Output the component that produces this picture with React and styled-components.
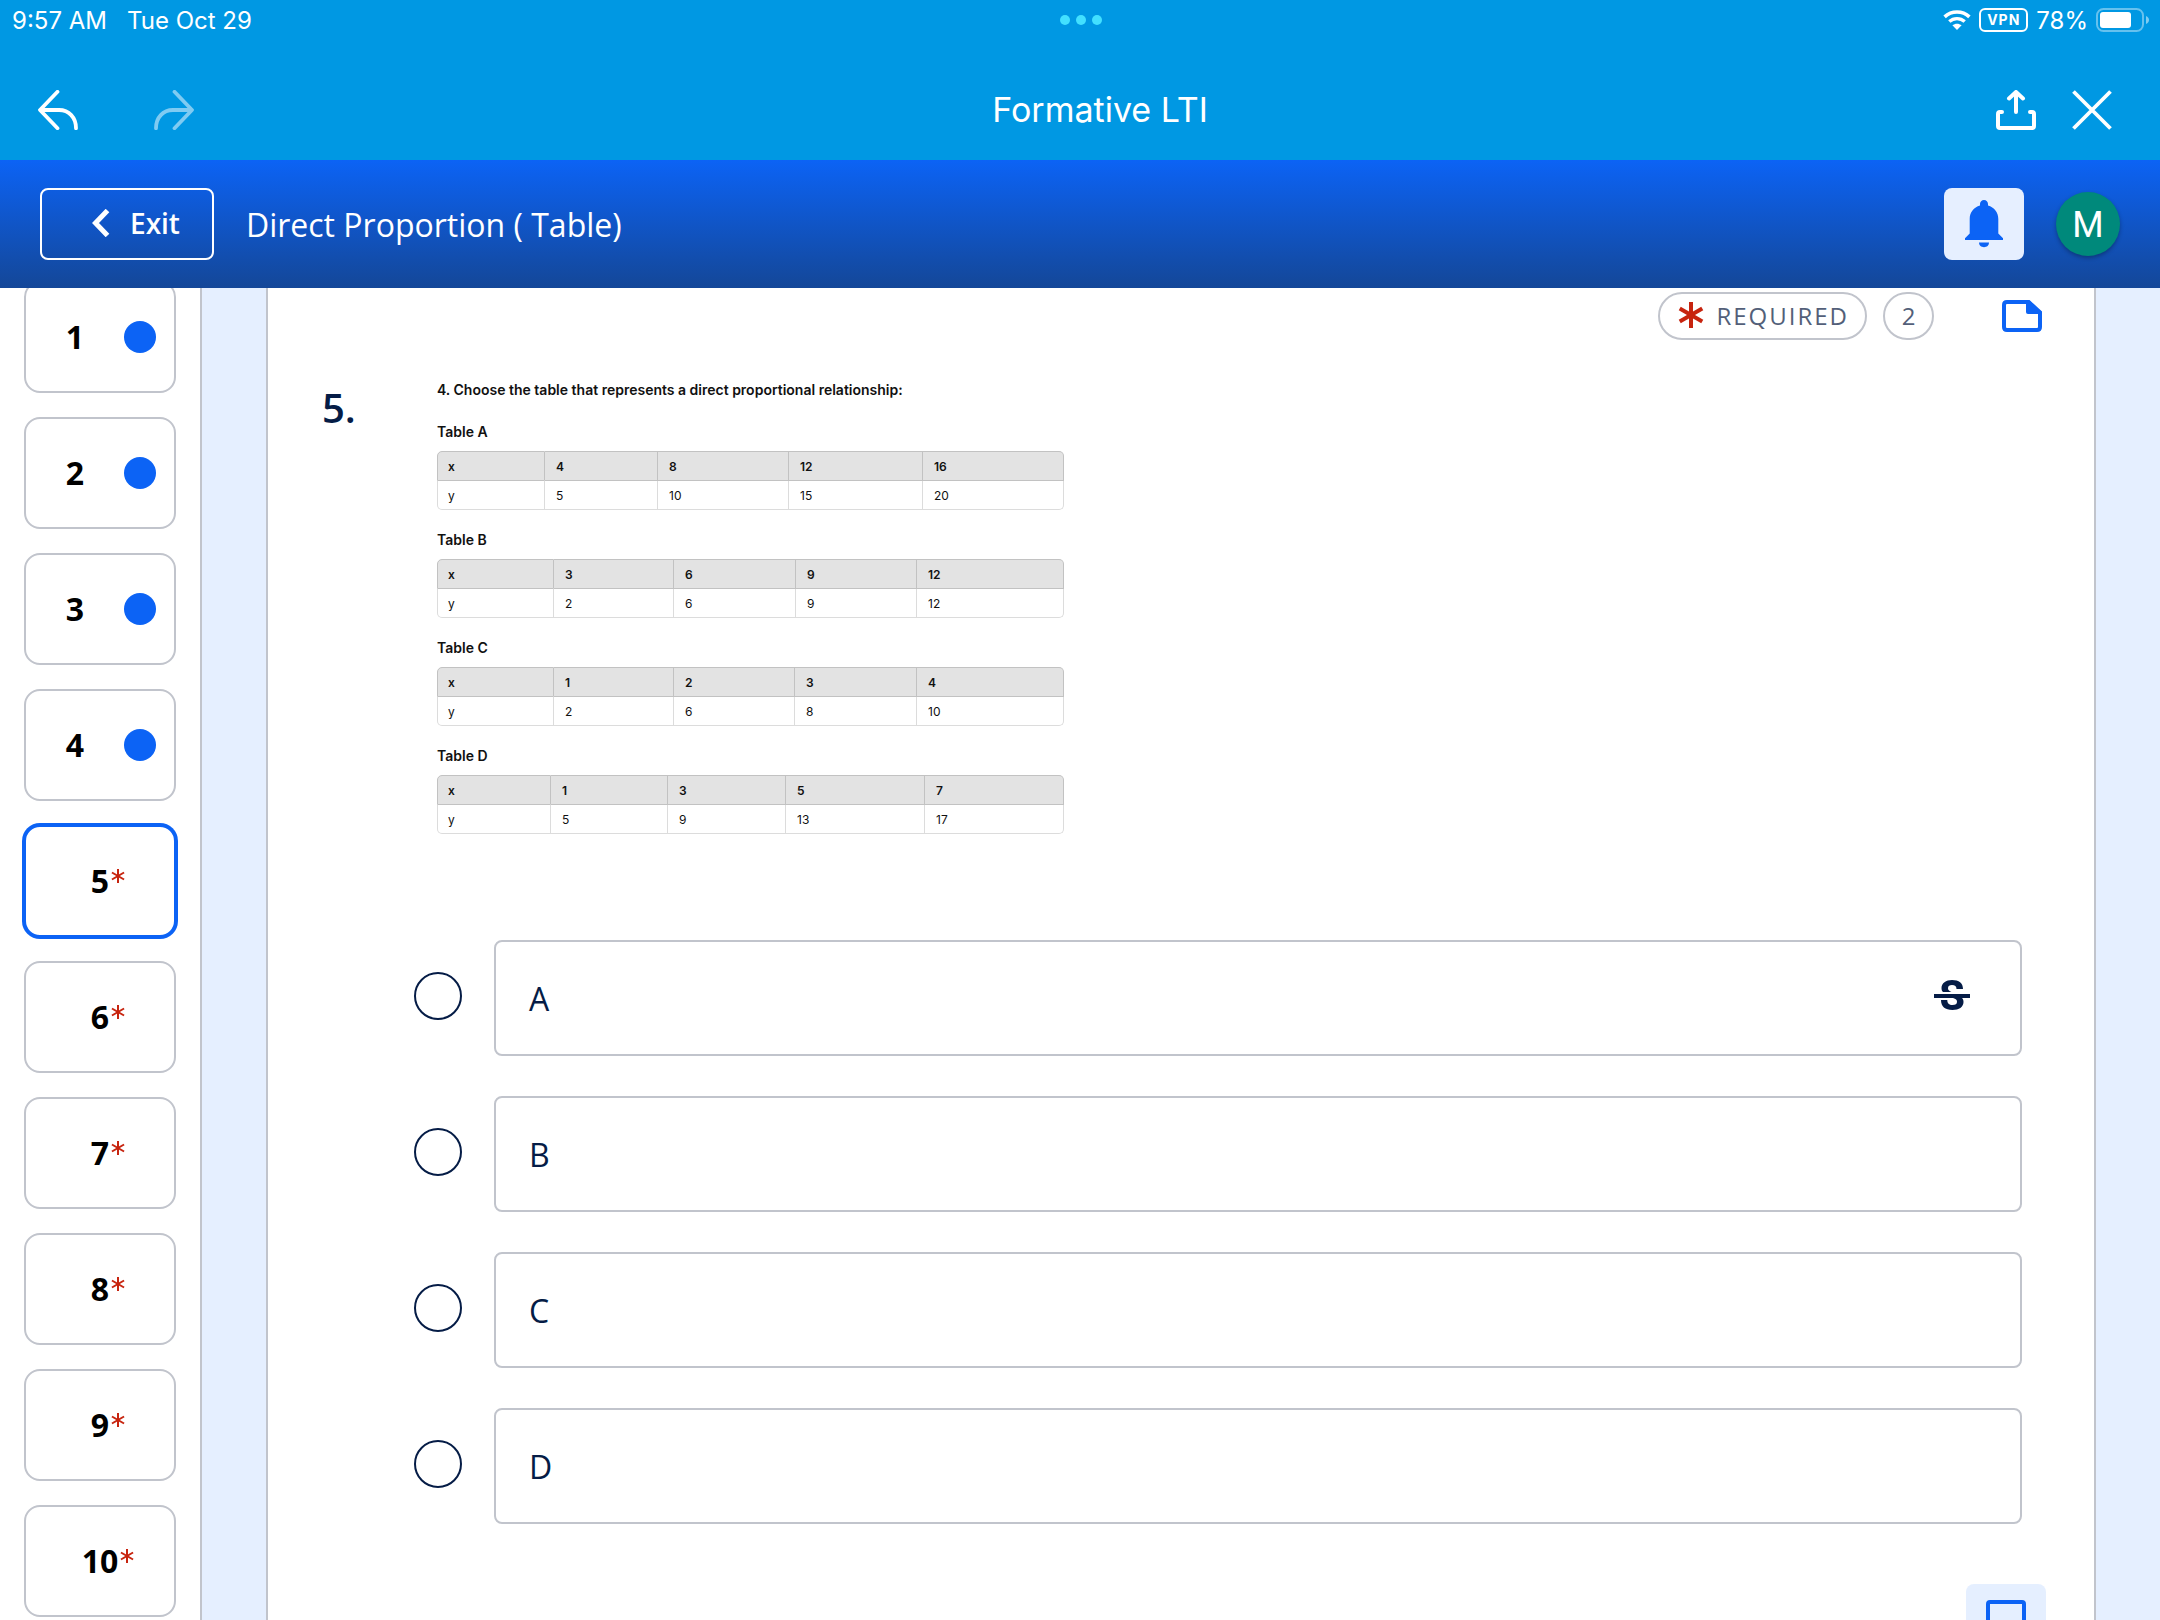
import React, { useState } from "react";
import styled, { createGlobalStyle } from "styled-components";

const questions = [
  { number: 1, done: true },
  { number: 2, done: true },
  { number: 3, done: true },
  { number: 4, done: true },
  { number: 5, required: true },
  { number: 6, required: true },
  { number: 7, required: true },
  { number: 8, required: true },
  { number: 9, required: true },
  { number: 10, required: true },
];

const tables = [
  {
    name: "Table A",
    widths: [108, 113, 131, 134, 141],
    x: [4, 8, 12, 16],
    y: [5, 10, 15, 20],
  },
  {
    name: "Table B",
    widths: [117, 120, 122, 121, 147],
    x: [3, 6, 9, 12],
    y: [2, 6, 9, 12],
  },
  {
    name: "Table C",
    widths: [117, 120, 121, 122, 147],
    x: [1, 2, 3, 4],
    y: [2, 6, 8, 10],
  },
  {
    name: "Table D",
    widths: [114, 117, 118, 139, 139],
    x: [1, 3, 5, 7],
    y: [5, 9, 13, 17],
  },
];

const choices = ["A", "B", "C", "D"];

export default function App() {
  const [answer, setAnswer] = useState(null);
  const [current, setCurrent] = useState(5);

  return (
    <Shell>
      <GlobalStyle />
      <StatusBar>
        <StatusGroup>
          <span>9:57 AM</span>
          <span>Tue Oct 29</span>
        </StatusGroup>
        <Dots>
          <i />
          <i />
          <i />
        </Dots>
        <StatusRight>
          <WifiIcon />
          <Vpn>VPN</Vpn>
          <span>78%</span>
          <BatteryIcon />
        </StatusRight>
      </StatusBar>

      <NavBar>
        <NavGroup $gap={76}>
          <IconButton aria-label="Back">
            <UndoIcon />
          </IconButton>
          <IconButton aria-label="Forward" disabled>
            <RedoIcon />
          </IconButton>
        </NavGroup>
        <NavTitle>Formative LTI</NavTitle>
        <NavGroup $gap={36}>
          <IconButton aria-label="Share">
            <ShareIcon />
          </IconButton>
          <IconButton aria-label="Close">
            <CloseIcon />
          </IconButton>
        </NavGroup>
      </NavBar>

      <Header>
        <ExitButton>
          <ChevronIcon />
          Exit
        </ExitButton>
        <HeaderTitle>Direct Proportion ( Table)</HeaderTitle>
        <BellButton aria-label="Notifications">
          <BellIcon />
        </BellButton>
        <Avatar>M</Avatar>
      </Header>

      <Body>
        <Sidebar>
          <TileList>
            {questions.map((q) => (
              <Tile
                key={q.number}
                $active={q.number === current}
                onClick={() => setCurrent(q.number)}
              >
                <TileNumber $required={q.required}>
                  {q.number}
                  {q.required && <Star size={14} width={2} />}
                </TileNumber>
                {q.done && <DoneDot />}
              </Tile>
            ))}
          </TileList>
        </Sidebar>

        <Main>
          <Card>
            <CardTop>
              <Pill>
                <Star size={26} width={4} />
                REQUIRED
              </Pill>
              <Points>2</Points>
              <IconButton aria-label="Note">
                <NoteIcon />
              </IconButton>
            </CardTop>

            <Question>
              <QuestionNumber>5.</QuestionNumber>
              <div>
                <Prompt>
                  <PromptTitle>
                    4. Choose the table that represents a direct proportional
                    relationship:
                  </PromptTitle>
                  {tables.map((t) => (
                    <DataTable key={t.name}>
                      <caption>{t.name}</caption>
                      <colgroup>
                        {t.widths.map((w, i) => (
                          <Col key={i} $width={w} />
                        ))}
                      </colgroup>
                      <thead>
                        <tr>
                          <th>x</th>
                          {t.x.map((v) => (
                            <th key={v}>{v}</th>
                          ))}
                        </tr>
                      </thead>
                      <tbody>
                        <tr>
                          <td>y</td>
                          {t.y.map((v) => (
                            <td key={v}>{v}</td>
                          ))}
                        </tr>
                      </tbody>
                    </DataTable>
                  ))}
                </Prompt>

                <Choices>
                  {choices.map((c, i) => (
                    <ChoiceRow key={c}>
                      <Radio
                        type="radio"
                        name="answer"
                        id={`choice-${c}`}
                        checked={answer === c}
                        onChange={() => setAnswer(c)}
                      />
                      <ChoiceBox>
                        <label htmlFor={`choice-${c}`}>{c}</label>
                        {i === 0 && (
                          <IconButton aria-label="Cross out answer">
                            <StrikeIcon />
                          </IconButton>
                        )}
                      </ChoiceBox>
                    </ChoiceRow>
                  ))}
                </Choices>
              </div>
            </Question>

            <CardBottom>
              <CommentButton aria-label="Comment">
                <CommentIcon />
              </CommentButton>
            </CardBottom>
          </Card>
        </Main>
      </Body>
    </Shell>
  );
}

//Icons
function WifiIcon() {
  return (
    <svg width="28" height="20" viewBox="0 0 28 20" fill="none">
      <path
        d="M1.6 6.9C8.6 .4 19.4 .4 26.4 6.9"
        stroke="#fff"
        strokeWidth="3.6"
      />
      <path
        d="M6.3 11.6c4.4-4 11-4 15.4 0"
        stroke="#fff"
        strokeWidth="3.4"
      />
      <path d="M14 20l-4.6-4.7c2.7-2.2 6.5-2.2 9.2 0z" fill="#fff" />
    </svg>
  );
}

function BatteryIcon() {
  return (
    <svg width="54" height="24" viewBox="0 0 54 24" fill="none">
      <rect
        x="1"
        y="1"
        width="46"
        height="22"
        rx="6.5"
        stroke="#fff"
        strokeOpacity=".4"
        strokeWidth="2"
      />
      <rect x="4" y="4" width="31" height="16" rx="3" fill="#fff" />
      <path d="M50 8c4 1.5 4 6.5 0 8z" fill="#fff" fillOpacity=".5" />
    </svg>
  );
}

function UndoIcon() {
  return (
    <svg width="40" height="40" viewBox="0 0 40 40" fill="none">
      <path
        d="M19.5 1.8L2 20l17.5 18.2M2.5 20H21c10 0 17 7.5 17 18.2"
        stroke="currentColor"
        strokeWidth="3.8"
        strokeLinecap="round"
        strokeLinejoin="round"
      />
    </svg>
  );
}

function RedoIcon() {
  return (
    <svg width="40" height="40" viewBox="0 0 40 40" fill="none">
      <path
        d="M20.5 1.8L38 20 20.5 38.2M37.5 20H19C9 20 2 27.5 2 38.2"
        stroke="currentColor"
        strokeWidth="3.8"
        strokeLinecap="round"
        strokeLinejoin="round"
      />
    </svg>
  );
}

function ShareIcon() {
  return (
    <svg width="40" height="40" viewBox="0 0 40 40" fill="none">
      <path
        d="M20 22V3M13 8.5l7-6.5 7 6.5M6 22H4q-2 0-2 2v12q0 2 2 2h32q2 0 2-2V24q0-2-2-2h-2"
        stroke="#fff"
        strokeWidth="4"
        strokeLinejoin="round"
        strokeLinecap="round"
      />
    </svg>
  );
}

function CloseIcon() {
  return (
    <svg width="40" height="40" viewBox="0 0 40 40">
      <path
        d="M1.5 1.5l37 37M38.5 1.5l-37 37"
        stroke="#fff"
        strokeWidth="3.8"
      />
    </svg>
  );
}

function ChevronIcon() {
  return (
    <svg width="18" height="28" viewBox="0 0 18 28" fill="none">
      <path d="M15.5 1.5L3.5 14l12 12.5" stroke="#fff" strokeWidth="5" />
    </svg>
  );
}

function BellIcon() {
  return (
    <svg width="38" height="48" viewBox="0 0 38 48" fill="#0c63f5">
      <path d="M19 0c-2.3 0-4 1.8-4 4v1.6C8.8 7.4 4.7 12.5 4.7 19v14.5L0 38.2V40h38v-1.8l-4.7-4.7V19c0-6.5-4.1-11.6-10.3-13.4V4c0-2.200-1.700-4-4-4z" />
      <path d="M14 42.5h10c0 2.8-2.2 4.7-5 4.7s-5-1.9-5-4.7z" />
    </svg>
  );
}

function NoteIcon() {
  return (
    <svg width="48" height="48" viewBox="0 0 48 48" fill="none">
      <path
        d="M9 10h21l12 11v14q0 3-3 3H9q-3 0-3-3V13q0-3 3-3z"
        stroke="#0c63f5"
        strokeWidth="4"
        strokeLinejoin="round"
      />
      <path d="M28 8h3.5L44 19.5V22H30q-2 0-2-2z" fill="#0c63f5" />
    </svg>
  );
}

function StrikeIcon() {
  return (
    <svg width="36" height="30" viewBox="0 0 36 30" fill="#051c46">
      <path d="M29 9C29 3 25 0 18 0 12 0 7.5 3 7.5 8c0 2 .5 3 1.5 4h8.500C15 11 14 10 14 8.300 14 6 15.500 5 18 5c3 0 4.500 1.500 4.500 4z" />
      <path d="M7 20c0 6.500 4 10 11.500 10 6.500 0 11-3 11-8 0-2-.5-3-1.500-4h-9c3 1 4 2 4 3.800 0 2.200-1.500 3.200-4.500 3.200-3.500 0-5.200-1.500-5.200-5z" />
      <path d="M0 14h36v4H0z" />
    </svg>
  );
}

function CommentIcon() {
  return (
    <svg width="40" height="40" viewBox="0 0 40 40" fill="none">
      <path
        d="M4 2h32q2 0 2 2v24q0 2-2 2H10l-8 8V4q0-2 2-2z"
        stroke="#0c63f5"
        strokeWidth="4"
      />
    </svg>
  );
}

function Star({ size, width }) {
  return (
    <svg width={size} height={size} viewBox={`0 0 ${size} ${size}`}>
      <g
        transform={`translate(${size / 2} ${size / 2})`}
        stroke="#c7240f"
        strokeWidth={width}
      >
        {[0, 60, 120].map((a) => (
          <line
            key={a}
            y1={-size / 2}
            y2={size / 2}
            transform={`rotate(${a})`}
          />
        ))}
      </g>
    </svg>
  );
}

//Styled components
const GlobalStyle = createGlobalStyle`
  * {
    box-sizing: border-box;
  }
  body {
    margin: 0;
    font-family: "Open Sans", "Noto Sans", sans-serif;
    color: #051c46;
    background: #fff;
  }
  button {
    font: inherit;
    cursor: pointer;
  }
  svg {
    display: block;
    flex: none;
  }
`;

const Shell = styled.div`
  display: flex;
  flex-direction: column;
  height: 100vh;
  overflow: hidden;
`;

const StatusBar = styled.div`
  display: grid;
  grid-template-columns: 1fr auto 1fr;
  align-items: center;
  height: 40px;
  padding: 0 10px 0 12px;
  background: #0098e3;
  color: #fff;
  font: 24px "Inter", sans-serif;
`;

const StatusGroup = styled.div`
  display: flex;
  align-items: center;
  gap: 20px;
`;

const StatusRight = styled(StatusGroup)`
  justify-content: flex-end;
  gap: 8px;
`;

const Dots = styled.div`
  display: flex;
  gap: 6px;
  i {
    width: 10px;
    height: 10px;
    border-radius: 50%;
    background: #42e0ff;
  }
`;

const Vpn = styled.span`
  height: 24px;
  padding: 0 6px;
  border: 2px solid #fff;
  border-radius: 6px;
  font-size: 14px;
  font-weight: 700;
  line-height: 20px;
  letter-spacing: 1px;
`;

const NavBar = styled.header`
  display: flex;
  align-items: center;
  height: 120px;
  padding: 20px 48px 0 38px;
  background: #0098e3;
`;

const NavGroup = styled.div`
  display: flex;
  gap: ${(props) => props.$gap}px;
`;

const NavTitle = styled.h1`
  flex: 1;
  margin: 0;
  padding-left: 10px;
  color: #fff;
  font: 400 34px/44px "Inter", sans-serif;
  text-align: center;
`;

const IconButton = styled.button`
  display: flex;
  padding: 0;
  border: 0;
  background: none;
  color: #fff;
  &:disabled {
    color: #7fcbf2;
  }
`;

const Header = styled.header`
  display: flex;
  align-items: center;
  height: 128px;
  padding: 0 40px;
  background: linear-gradient(#0c63f5, #144798);
`;

const ExitButton = styled.button`
  display: flex;
  align-items: center;
  gap: 20px;
  height: 72px;
  padding: 0 32px 2px 50px;
  border: 2px solid #fff;
  border-radius: 8px;
  background: none;
  color: #fff;
  && {
    font-size: 28px;
    font-weight: 600;
  }
`;

const HeaderTitle = styled.h2`
  flex: 1;
  margin: 0 0 0 32px;
  color: #fff;
  font-size: 32px;
  font-weight: 400;
`;

const BellButton = styled.button`
  display: flex;
  align-items: center;
  justify-content: center;
  width: 80px;
  height: 72px;
  border: 0;
  border-radius: 8px;
  background: #e6efff;
`;

const Avatar = styled.div`
  width: 64px;
  height: 64px;
  margin-left: 32px;
  border-radius: 50%;
  background: #00897b;
  box-shadow: 0 2px 4px rgba(0, 0, 0, 0.3);
  color: #fff;
  font: 400 36px/66px "Roboto", sans-serif;
  text-align: center;
`;

const Body = styled.div`
  display: flex;
  flex: 1;
  min-height: 0;
`;

const Sidebar = styled.nav`
  flex: none;
  width: 202px;
  overflow: hidden;
  border-right: 2px solid #c1c4cc;
`;

//List is scrolled a little, so the first tile goes under the header
const TileList = styled.div`
  display: flex;
  flex-direction: column;
  gap: 24px;
  margin-top: -7px;
  padding: 0 24px;
`;

const Tile = styled.button`
  display: flex;
  flex: none;
  align-items: center;
  height: 112px;
  padding: 0 18px 0 0;
  border: 2px solid ${(props) => (props.$active ? "#0c63f5" : "#c1c4cc")};
  border-radius: 16px;
  box-shadow: ${(props) => (props.$active ? "0 0 0 2px #0c63f5" : "none")};
  background: #fff;
  color: #000;
  && {
    font-size: 32px;
    font-weight: 700;
  }
`;

const TileNumber = styled.span`
  display: flex;
  flex: 1;
  justify-content: center;
  padding-left: ${(props) => (props.$required ? 34 : 0)}px;
  line-height: 44px;
  svg {
    margin: 10px 0 0 2px;
  }
`;

const DoneDot = styled.span`
  width: 32px;
  height: 32px;
  border-radius: 50%;
  background: #0c63f5;
`;

const Main = styled.main`
  display: flex;
  flex: 1;
  padding: 0 64px;
  overflow: hidden;
  background: #e5efff;
`;

const Card = styled.section`
  flex: 1;
  padding: 4px 48px 0 54px;
  border: solid #c1c4cc;
  border-width: 0 2px;
  background: #fff;
`;

const CardTop = styled.div`
  display: flex;
  justify-content: flex-end;
`;

const Pill = styled.span`
  display: flex;
  align-items: center;
  gap: 12px;
  height: 48px;
  padding: 0 16px 2px 18px;
  border: 2px solid #c1c4cc;
  border-radius: 24px;
  color: #535f79;
  font-size: 24px;
  font-weight: 500;
  letter-spacing: 2px;
`;

const Points = styled.span`
  width: 51px;
  height: 48px;
  margin: 0 64px 0 16px;
  border: 2px solid #c1c4cc;
  border-radius: 24px;
  color: #535f79;
  font-size: 24px;
  font-weight: 500;
  line-height: 44px;
  text-align: center;
`;

const Question = styled.div`
  display: grid;
  grid-template-columns: 92px 1fr;
  padding: 40px 24px 0 0;
`;

const QuestionNumber = styled.div`
  font-size: 40px;
  font-weight: 600;
  line-height: 56px;
`;

const Prompt = styled.div`
  padding-left: 23px;
  color: #111;
  font-family: "Inter", sans-serif;
`;

const PromptTitle = styled.h3`
  margin: 0 0 22px;
  font-size: 14px;
  font-weight: 600;
  line-height: 20px;
`;

const DataTable = styled.table`
  width: 627px;
  margin-bottom: 20px;
  table-layout: fixed;
  border-spacing: 0;
  font-size: 12px;
  caption {
    padding-bottom: 9px;
    font-size: 14px;
    font-weight: 600;
    line-height: 20px;
    text-align: left;
  }
  th,
  td {
    height: 29px;
    padding: 0 0 0 11px;
    border: solid #dcdcdc;
    border-width: 0 1px 1px 0;
    text-align: left;
  }
  th {
    height: 30px;
    border-color: #c2c2c2;
    border-top-width: 1px;
    background: #e3e3e3;
    font-weight: 600;
  }
  th:first-child,
  td:first-child {
    padding-left: 10px;
    border-left-width: 1px;
  }
  th:first-child {
    border-top-left-radius: 5px;
  }
  th:last-child {
    border-top-right-radius: 5px;
  }
  td:first-child {
    border-bottom-left-radius: 5px;
  }
  td:last-child {
    border-bottom-right-radius: 5px;
  }
`;

const Col = styled.col`
  width: ${(props) => props.$width}px;
`;

const Choices = styled.div`
  display: flex;
  flex-direction: column;
  gap: 40px;
  margin-top: 106px;
`;

const ChoiceRow = styled.div`
  display: flex;
  gap: 32px;
`;

const Radio = styled.input`
  flex: none;
  width: 48px;
  height: 48px;
  margin: 32px 0 0;
  appearance: none;
  border: 2px solid #051c46;
  border-radius: 50%;
  &:checked {
    border-width: 14px;
  }
`;

const ChoiceBox = styled.div`
  display: flex;
  flex: 1;
  align-items: center;
  justify-content: space-between;
  height: 116px;
  padding: 0 50px 0 33px;
  border: 2px solid #c1c4cc;
  border-radius: 8px;
  font-size: 32px;
  svg {
    margin-bottom: 6px;
  }
`;

const CardBottom = styled.div`
  display: flex;
  justify-content: flex-end;
  margin-top: 60px;
`;

const CommentButton = styled.button`
  padding: 16px 20px;
  border: 0;
  border-radius: 8px;
  background: #e5efff;
`;
